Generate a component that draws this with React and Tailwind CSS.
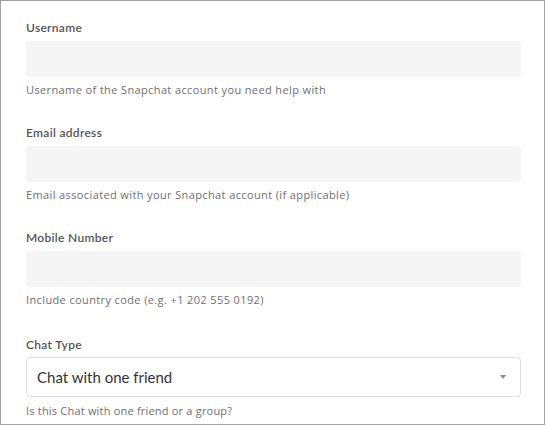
import React from 'react';

const fields = [
    { label: 'Username', help: 'Username of the Snapchat account you need help with' },
    { label: 'Email address', help: 'Email associated with your Snapchat account (if applicable)' },
    { label: 'Mobile Number', help: 'Include country code (e.g. +1 202 555 0192)' },
];

const Field = ({ label, help }) => (
    <div className="flex flex-col">
        <label className="text-[12px] leading-[16px] font-semibold text-[#555] tracking-[0.3px]">{label}</label>
        <input type="text" className="mt-[5px] h-[36px] w-full rounded-[3px] bg-[#f5f5f5] outline-none" />
        <p className="mt-[5px] text-[11px] leading-[16px] text-[#6f6f6f] font-['Open_Sans',sans-serif] tracking-[0.38px]">{help}</p>
    </div>
);

const App = () => {
    return (
        <div className="w-[546px] h-[426px] bg-white font-['Lato','Noto_Sans',sans-serif]">
            <div className="w-[545px] h-[425px] border border-[#a3a3a3] pt-[19px] pl-[25px] pr-[23px] flex flex-col gap-[27px]">
                {fields.map(f => (
                    <Field key={f.label} label={f.label} help={f.help} />
                ))}
                <div className="flex flex-col mt-[2px]">
                    <label className="text-[12px] leading-[16px] font-semibold text-[#555] tracking-[0.3px]">Chat Type</label>
                    <div className="mt-[4px] h-[40px] w-full rounded-[4px] border border-[#dedede] bg-white flex items-center justify-between pl-[10px] pr-[14px]">
                        <span className="text-[15px] text-[#333]">Chat with one friend</span>
                        <span className="w-0 h-0 border-l-[3px] border-r-[3px] border-t-[4px] border-l-transparent border-r-transparent border-t-[#8a8a8a]" />
                    </div>
                    <p className="mt-[6px] text-[11px] leading-[16px] text-[#6f6f6f] font-['Open_Sans',sans-serif] tracking-[0.2px]">Is this Chat with one friend or a group?</p>
                </div>
            </div>
        </div>
    );
};

export default App;
